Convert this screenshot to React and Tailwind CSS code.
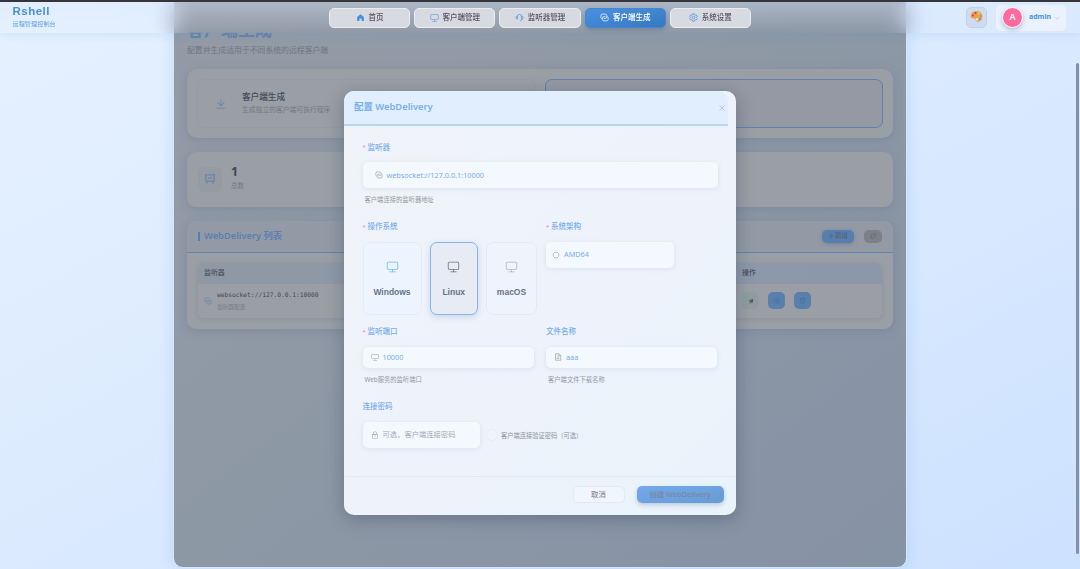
import { LuPlus, LuRefreshCw, LuTrash2, LuCircleArrowRight } from 'react-icons/lu'

const sans = 'font-["Noto_Sans","Noto_Sans_CJK_SC",sans-serif]'
const arial = 'font-["Liberation_Sans","Noto_Sans_CJK_SC",sans-serif]'

// Solid icons on a 1024 grid
const paths = {
  home: ['M512 128 128 447.936V896h255.936V640H640v256h255.936V447.936z'],
  monitor: [
    'M544 768v128h192a32 32 0 1 1 0 64H288a32 32 0 1 1 0-64h192V768H192A128 128 0 0 1 64 640V256a128 128 0 0 1 128-128h640a128 128 0 0 1 128 128v384a128 128 0 0 1-128 128H544zM192 192a64 64 0 0 0-64 64v384a64 64 0 0 0 64 64h640a64 64 0 0 0 64-64V256a64 64 0 0 0-64-64H192z',
  ],
  download: [
    'M160 832h704a32 32 0 1 1 0 64H160a32 32 0 1 1 0-64zm384-253.696 236.288-236.352 45.248 45.248L508.8 704 192 387.2l45.248-45.248L480 584.704V128h64v450.304z',
  ],
  lock: [
    'M224 448a32 32 0 0 0-32 32v384a32 32 0 0 0 32 32h576a32 32 0 0 0 32-32V480a32 32 0 0 0-32-32H224zm0-64h576a96 96 0 0 1 96 96v384a96 96 0 0 1-96 96H224a96 96 0 0 1-96-96V480a96 96 0 0 1 96-96z',
    'M512 544a32 32 0 0 1 32 32v192a32 32 0 1 1-64 0V576a32 32 0 0 1 32-32zM704 384v-64a192 192 0 1 0-384 0v64h384zM512 64a256 256 0 0 1 256 256v128H256V320A256 256 0 0 1 512 64z',
  ],
  send: ['m64 448 832-320-128 704-446.08-243.328L832 192 242.816 545.536 64 448zm256 512V657.024L512 768 320 960z'],
}

// Outline icons on a 16 grid
const outlines = {
  connection: 'M3 10A2.600 2.600 0 0 1 1.500 7.500V4.500A2.600 2.600 0 0 1 4 2h5.500A2.600 2.600 0 0 1 12 4.500v2.500A2.600 2.600 0 0 1 9.500 9.500H6.500M13 6.500A2.600 2.600 0 0 1 14.500 9v2.500A2.600 2.600 0 0 1 12 14H6.800A2.600 2.600 0 0 1 4.300 11.500V9A2.600 2.600 0 0 1 6.800 6.500H9.500',
  headset: 'M3.5 6.2a4.6 4.6 0 0 1 9 0M4.600 5.800v4.800H4a2.400 2.400 0 0 1 0-4.800zM11.400 5.800v4.800H12a2.400 2.400 0 0 0 0-4.800zM12.5 10.4c0 2-1.5 3.2-3.6 3.2',
  setting: 'M6.4 1.5h3.2l.5 1.8 1.2.7 1.8-.5 1.6 2.8L13.4 7.6v1l1.3 1.2-1.6 2.8-1.8-.5-1.2.7-.5 1.8H6.4l-.5-1.8-1.2-.7-1.8.5-1.6-2.8 1.3-1.2v-1L1.3 6.3l1.6-2.8 1.8.5 1.2-.7zM10.5 8a2.5 2.5 0 1 1-5 0a2.5 2.5 0 1 1 5 0',
  board: 'M1 2.5h14M2.5 2.5v8.5h11V2.5M5 11l-1.5 3.5M11 11l1.5 3.5M5 8l2-2 2 1.5L11 5',
  cpu: 'M5.5 2.5h5l3 3v5l-3 3h-5l-3-3v-5z',
  doc: 'M3 1.5h7l3.5 3.5v9.5H3zM9.5 1.5V5.500h4M5.500 8h5M5.500 11h5M5.500 5.500h1.500',
  down: 'M2 5l6 6 6-6',
  close: 'M3 3l10 10M13 3L3 13',
}

function Icon({ name, className }) {
  if (outlines[name]) {
    return (
      <svg viewBox="0 0 16 16" className={className} fill="none" stroke="currentColor" strokeWidth="1.3">
        <path d={outlines[name]} />
      </svg>
    )
  }
  return (
    <svg viewBox="0 0 1024 1024" className={className} fill="currentColor">
      {paths[name].map((d) => (
        <path key={d} d={d} />
      ))}
    </svg>
  )
}

const navItems = [
  { icon: 'home', label: '首页' },
  { icon: 'monitor', label: '客户端管理' },
  { icon: 'headset', label: '监听器管理' },
  { icon: 'connection', label: '客户端生成', active: true },
  { icon: 'setting', label: '系统设置' },
]

function Palette() {
  return (
    <svg viewBox="0 0 24 24" className="-mt-[2px] h-[13px] w-[13px]">
      <path d="M12 2C5.500 2 1 6 1 11c0 3 2 4.500 5 4.500 3-.2 4 .5 4 2.700C10 21 12 22 14 22c5 0 9-4 9-9.500C23 6 18 2 12 2z" fill="#e9a05c" />
      <circle cx="5.500" cy="10" r="1.900" fill="#d8443c" />
      <circle cx="10" cy="5.800" r="1.900" fill="#d8443c" />
      <circle cx="16" cy="6.500" r="1.700" fill="#f4d04b" />
      <circle cx="20" cy="11" r="1.700" fill="#6db35b" />
      <circle cx="18" cy="16.500" r="1.700" fill="#4a90d9" />
      <circle cx="13" cy="17" r="2.200" fill="#f7ead9" />
    </svg>
  )
}

function Header() {
  return (
    <header className="absolute inset-x-0 top-0 z-30 flex h-[33px] items-center border-t-2 border-[#35353a] bg-gradient-to-b from-[#dbe9ff]/35 to-[#dbe9ff]/0 pl-[12.500px] pr-[13px] shadow-[0_2px_8px_rgba(74,144,226,0.14)] backdrop-blur-[11px]">
      <div className="w-[316.500px]">
        <div className={`${arial} -mt-[2px] text-[11.5px] font-bold leading-[12px] tracking-[0.5px] text-[#4a8fdc]`}>Rshell</div>
        <div className={`${sans} mt-[3px] text-[6.2px] leading-[8px] text-[#5f9fe6]`}>远程管理控制台</div>
      </div>
      <nav className="flex gap-[4px]">
        {navItems.map((item) => (
          <div
            key={item.label}
            className={`${sans} flex h-[20px] w-[81.2px] items-center justify-center gap-[4px] rounded-[5px] border text-[7.5px] font-medium ${
              item.active
                ? 'border-[#4787d2] bg-gradient-to-br from-[#4a90e2] to-[#357abd] font-bold text-white shadow-[0_2px_4px_rgba(50,80,120,0.3)]'
                : 'border-[#e9ecf1] bg-[#d7dae1] text-[#5b5260]'
            }`}
          >
            <Icon name={item.icon} className={`h-[9px] w-[9px] ${item.active ? 'text-white' : 'text-[#4a90e2]'}`} />
            {item.label}
          </div>
        ))}
      </nav>
      <div className="ml-auto flex items-center gap-[8px]">
        <div className="flex h-[21px] w-[21px] items-center justify-center rounded-[5px] border border-[#bfd0e8] bg-[#cddcf1]">
          <Palette />
        </div>
        <div className="flex h-[28px] w-[72px] items-center rounded-[6px] border border-[#dde8f7] bg-[#e9f2fe] pl-[6px]">
          <div className={`${arial} flex h-[21px] w-[21px] items-center justify-center rounded-full border-[1.500px] border-white bg-[#ff6b9d] text-[9px] font-bold text-white shadow-[0_2px_4px_rgba(80,100,140,0.35)]`}>
            A
          </div>
          <span className={`${sans} -mt-[1px] ml-[6px] text-[7px] font-bold text-[#4a90e2]`}>admin</span>
          <Icon name="down" className="ml-[3px] h-[6px] w-[6px] text-[#a9b8cc]" />
        </div>
      </div>
    </header>
  )
}

function Page() {
  return (
    <main className={`${sans} ml-[173px] flex h-[568px] w-[734px] flex-col rounded-b-[10px] border border-[#d6e5f8] bg-gradient-to-br from-[#949ba6] via-[#8d98a5] to-[#8692a5] px-[13px] pt-[17.500px] shadow-[0_0_16px_rgba(74,144,226,0.2)]`}>
      {/* only the part below the header stays readable */}
      <h1 className="text-[17px] font-bold leading-[22px] text-[#6482a8] [clip-path:inset(14px_0_0_0)]">客户端生成</h1>
      <p className="mt-[4.500px] text-[7.85px] leading-[10px] text-[#6f7682]">配置并生成适用于不同系统的远程客户端</p>

      <section className="mt-[14px] grid h-[69px] shrink-0 grid-cols-2 gap-[9px] rounded-[10px] bg-[#9a9ea5] p-[10px] shadow-[0_2px_10px_rgba(80,100,130,0.25)]">
        <div className="flex items-center rounded-[7px] border border-[#969aa2] pl-[17px]">
          <Icon name="download" className="h-[12px] w-[12px] text-[#5d85b5]" />
          <div className="ml-[15px]">
            <div className="text-[8.600px] font-medium leading-[11px] text-[#3f4d59]">客户端生成</div>
            <div className="mt-[2px] text-[6.800px] leading-[10px] text-[#747a84]">生成独立的客户端可执行程序</div>
          </div>
        </div>
        <div className="rounded-[7px] border border-[#5f81ae] bg-[#9499a3]" />
      </section>

      <section className="mt-[13.500px] flex h-[55px] shrink-0 items-center rounded-[9px] bg-[#9a9ea5] pl-[11px] shadow-[0_2px_10px_rgba(80,100,130,0.25)]">
        <div className="flex h-[25px] w-[24px] items-center justify-center rounded-[6px] bg-[#969ba3]">
          <Icon name="board" className="h-[12px] w-[12px] text-[#5b82b2]" />
        </div>
        <div className="-mt-[3px] ml-[9px]">
          <div className="text-[12.500px] font-bold leading-[14px] text-[#3f4954]">1</div>
          <div className="mt-[2px] text-[6.500px] leading-[9px] text-[#747a84]">总数</div>
        </div>
      </section>

      <section className="mt-[14px] flex h-[108.500px] shrink-0 flex-col rounded-[9px] bg-[#9a9ea5] shadow-[0_2px_10px_rgba(80,100,130,0.25)]">
        <div className="flex h-[32px] shrink-0 items-center rounded-t-[9px] border-b border-[#5f84b4] bg-[#939aa5] px-[11px]">
          <span className="h-[9px] w-[2px] bg-[#4f7fb8]" />
          <span className="ml-[4px] text-[9.300px] font-semibold text-[#5a80b0]">WebDelivery 列表</span>
          <div className="ml-auto flex gap-[10px]">
            <div className="flex h-[13px] w-[32px] items-center justify-center gap-[1px] rounded-[5px] bg-[#567fae] text-[6.500px] text-[#59616c] shadow-[0_1px_4px_rgba(60,90,130,0.4)]">
              <LuPlus className="h-[6px] w-[6px]" />
              新增
            </div>
            <div className="flex h-[13px] w-[18px] items-center justify-center rounded-[5px] bg-[#7c8087] text-[#62666d]">
              <LuRefreshCw className="h-[6px] w-[6px]" />
            </div>
          </div>
        </div>
        <div className="mx-[11px] mt-[10px] overflow-hidden rounded-[6px] shadow-[0_1px_4px_rgba(90,110,140,0.25)]">
          <div className="flex h-[21px] items-center bg-gradient-to-r from-[#8f99a5] to-[#8c98aa] text-[6.900px] font-medium text-[#4b4f5c]">
            <span className="w-[544px] pl-[6px]">监听器</span>
            <span>操作</span>
          </div>
          <div className="flex h-[34px] items-center bg-[#9b9fa5]">
            <div className="flex w-[544px] items-center pl-[6px]">
              <Icon name="connection" className="h-[8px] w-[8px] text-[#5d85b5]" />
              <div className="ml-[5px]">
                <div className='font-["DejaVu_Sans_Mono",monospace] text-[6.250px] leading-[8px] text-[#414a55]'>
                  websocket://127.0.0.1:10000
                </div>
                <div className="mt-[4px] text-[5.700px] leading-[8px] text-[#757b85]">监听器配置</div>
              </div>
            </div>
            <div className="flex gap-[9px]">
              <div className="flex h-[17px] w-[17px] items-center justify-center rounded-[5px] bg-gradient-to-br from-[#87a1a4] to-[#9b979d] text-[#474e57]">
                <Icon name="send" className="h-[6px] w-[6px]" />
              </div>
              <div className="flex h-[17px] w-[17px] items-center justify-center rounded-[5px] bg-[#5880ad] text-[#4e6f96]">
                <LuCircleArrowRight className="h-[7px] w-[7px]" />
              </div>
              <div className="flex h-[17px] w-[17px] items-center justify-center rounded-[5px] bg-[#5880ad] text-[#4e6f96]">
                <LuTrash2 className="h-[7px] w-[7px]" />
              </div>
            </div>
          </div>
        </div>
      </section>
    </main>
  )
}

function Label({ required, children }) {
  return (
    <div className="flex h-[12px] items-center text-[7.500px] font-medium text-[#78aeee]">
      {required && <span className="mr-[2px] w-[3px] text-[6px] text-[#f58a97]">*</span>}
      {children}
    </div>
  )
}

function Field({ icon, className, children }) {
  return (
    <div className={`flex items-center gap-[4px] rounded-[5px] bg-[#f4f8ff] text-[7.300px] text-[#78aeee] shadow-[0_1px_5px_rgba(100,130,170,0.14)] ${className}`}>
      <Icon name={icon} className="h-[8px] w-[8px] text-[#9b9ca8]" />
      {children}
    </div>
  )
}

function Hint({ children }) {
  return <div className="ml-[2px] text-[6.300px] leading-[9px] text-[#9299a5]">{children}</div>
}

function OsCard({ name, className }) {
  return (
    <div className={`flex h-[73px] flex-col items-center rounded-[7px] border pt-[17px] ${className}`}>
      <Icon name="monitor" className="h-[13px] w-[13px]" />
      <span className={`${arial} mt-[13px] text-[8.500px] font-bold leading-[12px] text-[#65758a]`}>{name}</span>
    </div>
  )
}

function Dialog() {
  return (
    <div className={`${sans} absolute left-[344px] top-[91px] z-20 flex h-[424px] w-[392px] flex-col overflow-hidden rounded-[10px] bg-gradient-to-br from-[#f0f3f8] via-[#eef2fb] via-50% to-[#e9f3fb] shadow-[0_4px_18px_rgba(50,65,90,0.4)]`}>
      <div className="flex h-[35px] w-[384px] shrink-0 items-center justify-between rounded-tr-[10px] border-b-2 border-[#b4d6f7] bg-[#e1eefe] pl-[10px] pr-[2px]">
        <span className="text-[9.400px] font-semibold text-[#78aeee]">配置 WebDelivery</span>
        <Icon name="close" className="h-[8px] w-[8px] text-[#a7b4c8]" />
      </div>

      <div className="flex flex-1 flex-col pl-[18.500px] pr-[18px] pt-[15.500px]">
        <Label required>监听器</Label>
        <Field icon="connection" className="mt-[8.500px] h-[26px] w-[355px] pl-[12px]">
          websocket://127.0.0.1:10000
        </Field>
        <div className="mt-[7px]">
          <Hint>客户端连接的监听器地址</Hint>
        </div>

        <div className="mt-[17px] flex">
          <div className="w-[183.500px]">
            <Label required>操作系统</Label>
            <div className="mt-[8.500px] flex">
              <OsCard name="Windows" className="w-[59px] border-[#e4ebf5] bg-[#edf4fd] text-[#5cc3f3]" />
              <OsCard name="Linux" className="ml-[8.500px] w-[47.500px] border-[#86b4ec] bg-[#e7ebf3] text-[#6d717c] shadow-[0_2px_6px_rgba(100,130,170,0.25)]" />
              <OsCard name="macOS" className="ml-[8.500px] w-[51px] border-[#e4e9f3] bg-[#eff3fb] text-[#b2b6c0]" />
            </div>
          </div>
          <div>
            <Label required>系统架构</Label>
            <Field icon="cpu" className="mt-[8.500px] h-[26px] w-[128px] pl-[6px]">
              AMD64
            </Field>
          </div>
        </div>

        <div className="mt-[11.500px] flex gap-[12.500px]">
          <div className="w-[171px]">
            <Label required>监听端口</Label>
            <Field icon="monitor" className="mb-[7.500px] mt-[8.500px] h-[21px] w-full pl-[8px]">
              10000
            </Field>
            <Hint>Web服务的监听端口</Hint>
          </div>
          <div className="w-[171px]">
            <Label>文件名称</Label>
            <Field icon="doc" className="mb-[7.500px] mt-[8.500px] h-[21px] w-full pl-[8px]">
              aaa
            </Field>
            <Hint>客户端文件下载名称</Hint>
          </div>
        </div>

        <div className="mt-[16.500px]">
          <Label>连接密码</Label>
          <div className="mt-[9px] flex items-center">
            <Field icon="lock" className="h-[26px] w-[117.500px] pl-[8px]">
              <span className="text-[#a4a9b6]">可选，客户端连接密码</span>
            </Field>
            <span className="ml-[6px] h-[12px] w-[12px] rounded-full border border-[#e6ecf6] bg-[#f0f5fd]" />
            <span className="ml-[3px] mt-[3px] text-[6.250px] text-[#8e95a1]">客户端连接验证密码（可选）</span>
          </div>
        </div>
      </div>

      <div className="flex h-[39px] shrink-0 items-start justify-end gap-[12px] border-t border-[#e1e8f2] pr-[12.500px] pt-[9px] text-[7.400px]">
        <button className="h-[17px] w-[52px] rounded-[5px] border border-[#e2e9f5] bg-[#f1f6fe] font-medium text-[#8c8c9b]">取消</button>
        <button className="h-[17px] w-[87px] rounded-[5px] bg-gradient-to-br from-[#74a9eb] to-[#669bd3] font-medium text-[#7c86a0] shadow-[0_2px_4px_rgba(80,110,150,0.3)]">
          创建 WebDelivery
        </button>
      </div>
    </div>
  )
}

export default function App() {
  return (
    <div className="relative h-[569px] w-[1080px] overflow-hidden bg-gradient-to-br from-[#e6f1ff] via-[#dbeafe] to-[#cde2ff]">
      <Header />
      <Page />
      <Dialog />
      <div className="absolute right-[1px] top-[63px] h-[491px] w-[3px] rounded-full bg-[#8490a6]" />
    </div>
  )
}
